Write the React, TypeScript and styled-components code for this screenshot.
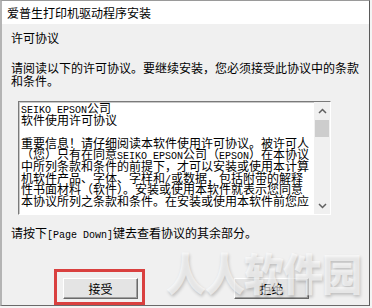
import React from 'react';
import styled, { createGlobalStyle } from 'styled-components';

const GlobalStyle = createGlobalStyle`
  html, body {
    margin: 0;
    padding: 0;
    background: #f4f4f4;
  }
`;

const cjk = `"Noto Sans CJK SC", "Liberation Sans", sans-serif`;

const Window = styled.div`
  position: relative;
  width: 367px;
  height: 304px;
  border-top: 1px solid #9a9a9a;
  border-left: 2px solid #b4b4b4;
  border-right: 1px solid #5a5a5a;
  border-bottom: 1px solid #6a6a6a;
  background: #f0f0f0;
  font-family: ${cjk};
  color: #000;
  overflow: hidden;
  display: flex;
  flex-direction: column;
`;

const TitleBar = styled.div`
  height: 25px;
  display: flex;
  align-items: center;
  padding-left: 5px;
  background: #fff;
  font-size: 12px;
  line-height: 14px;
`;

const Body = styled.div`
  flex: 1;
  display: flex;
  flex-direction: column;
  padding: 6px 0 0 9px;
`;

const Heading = styled.div`
  font-size: 12px;
  line-height: 16px;
`;

const Intro = styled.div`
  margin-top: 15px;
  font-size: 12px;
  line-height: 13px;
  white-space: nowrap;
`;

const LicenseBox = styled.div`
  margin: 14px 0 0 7px;
  width: 311px;
  height: 112px;
  display: flex;
  border-top: 1px solid #7a7a7a;
  border-left: 1px solid #7a7a7a;
  border-right: 1px solid #fff;
  border-bottom: 1px solid #fff;
  box-shadow: inset 1px 1px 0 #c8c8c8;
  background: #fff;
`;

const LicenseText = styled.div`
  flex: 1;
  padding: 3px 0 0 2px;
  font-family: "Liberation Mono", ${cjk};
  font-size: 12px;
  line-height: 11.6px;
  white-space: pre;
  overflow: hidden;
`;

const Latin = styled.span`
  font-family: "Liberation Mono", monospace;
  font-size: 10px;
`;

const Scrollbar = styled.div`
  width: 16px;
  display: flex;
  flex-direction: column;
  background: #f0f0f0;
`;

const ArrowButton = styled.div`
  height: 17px;
  display: flex;
  align-items: center;
  justify-content: center;
`;

const Thumb = styled.div`
  height: 17px;
  margin: 1px 1px 0;
  background: #cdcdcd;
`;

const Track = styled.div`
  flex: 1;
`;

const Hint = styled.div`
  margin-top: 11px;
  font-size: 12px;
  line-height: 14px;
  white-space: nowrap;
`;

const ButtonRow = styled.div`
  margin-top: 26px;
  display: flex;
  align-items: flex-start;
`;

const Highlight = styled.div`
  margin-left: 43px;
  padding: 6px 4px 3px 6px;
  border: 3px solid #d9403f;
`;

const Button = styled.div<{ $offset?: number }>`
  width: 73px;
  height: 19px;
  margin-top: ${p => p.$offset ?? 0}px;
  margin-left: ${p => (p.$offset ? 89 : 0)}px;
  display: flex;
  align-items: center;
  justify-content: center;
  background: #e4e4e4;
  border-top: 1px solid #fff;
  border-left: 1px solid #fff;
  border-right: 1px solid #6a6a6a;
  border-bottom: 1px solid #6a6a6a;
  box-shadow: inset -1px -1px 0 #a0a0a0;
  font-size: 12px;
  line-height: 14px;
`;

const Watermark = styled.div`
  position: absolute;
  left: 164px;
  top: 244px;
  font-family: ${cjk};
  font-size: 40px;
  font-weight: 900;
  line-height: 48px;
  letter-spacing: -1px;
  color: rgba(255, 255, 255, 0.6);
  text-shadow: 1px 2px 3px rgba(0, 0, 0, 0.2);
  transform: scaleY(1.12);
  transform-origin: top left;
  pointer-events: none;
  white-space: nowrap;
`;

const Chevron: React.FC<{ down?: boolean }> = ({ down }) => (
  <svg width="9" height="6" viewBox="0 0 9 6">
    <polyline
      points={down ? '1,1 4.5,4.5 8,1' : '1,5 4.5,1.5 8,5'}
      fill="none"
      stroke="#606060"
      strokeWidth="1.5"
    />
  </svg>
);

export default function App() {
  return (
    <>
      <GlobalStyle />
      <Window>
        <TitleBar>爱普生打印机驱动程序安装</TitleBar>
        <Body>
          <Heading>许可协议</Heading>
          <Intro>
            请阅读以下的许可协议。要继续安装，您必须接受此协议中的条款
            <br />
            和条件。
          </Intro>
          <LicenseBox>
            <LicenseText>
              <Latin>SEIKO EPSON</Latin>公司{'\n'}
              软件使用许可协议{'\n'}
              {'\n'}
              重要信息！请仔细阅读本软件使用许可协议。被许可人{'\n'}
              （您）只有在同意<Latin>SEIKO EPSON</Latin>公司（<Latin>EPSON</Latin>）在本协议{'\n'}
              中所列条款和条件的前提下，才可以安装或使用本计算{'\n'}
              机软件产品、字体、字样和<Latin>/</Latin>或数据，包括附带的解释{'\n'}
              性书面材料（软件）。安装或使用本软件就表示您同意{'\n'}
              本协议所列之条款和条件。在安装或使用本软件前您应
            </LicenseText>
            <Scrollbar>
              <ArrowButton><Chevron /></ArrowButton>
              <Thumb />
              <Track />
              <ArrowButton><Chevron down /></ArrowButton>
            </Scrollbar>
          </LicenseBox>
          <Hint>
            请按下<Latin>[Page Down]</Latin>键去查看协议的其余部分。
          </Hint>
          <ButtonRow>
            <Highlight>
              <Button>接受</Button>
            </Highlight>
            <Button $offset={9}>拒绝</Button>
          </ButtonRow>
        </Body>
        <Watermark>人人软件园</Watermark>
      </Window>
    </>
  );
}
